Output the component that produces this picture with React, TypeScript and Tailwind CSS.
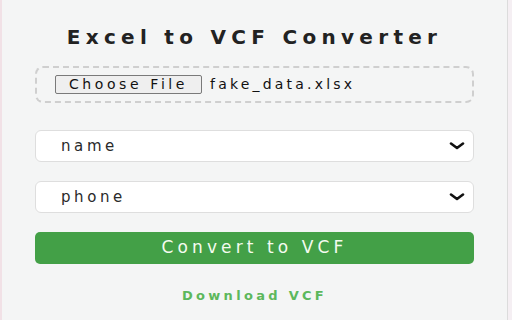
import React from 'react';

const Chevron: React.FC = () => (
  <svg width="16" height="8" viewBox="0 0 16 8" fill="none">
    <path d="M2 1.5 L8 6 L14 1.5" stroke="#111" strokeWidth="2.6" strokeLinecap="round" strokeLinejoin="round" />
  </svg>
);

const FieldSelect: React.FC<{ value: string }> = ({ value }) => (
  <div className="flex h-[32px] items-center justify-between rounded-[6px] border-[1.5px] border-[#dedede] bg-white pl-[25px] pr-[8px]">
    <span className="text-[15px] tracking-[3.6px] text-[#2a2a2a]">{value}</span>
    <Chevron />
  </div>
);

const App: React.FC = () => {
  return (
    <div className="flex h-[320px] w-[512px] overflow-hidden font-['DejaVu_Sans',sans-serif]">
      <div className="w-[2px] bg-[#f1e1e6]" />
      <main className="flex flex-1 flex-col bg-[#f4f5f5] px-[33px] pt-[25px]">
        <h1 className="text-center text-[20px] font-bold leading-[24px] tracking-[5.3px] text-[#222]">
          Excel to VCF Converter
        </h1>

        <div className="mt-[17px] flex h-[37px] items-center rounded-[8px] border-2 border-dashed border-[#cfcfcf] pl-[18px]">
          <div className="flex h-[19px] w-[147px] items-center justify-center rounded-[2px] border border-[#7a7a7a] bg-[#efefef] text-[14px] tracking-[3.6px] text-[#111]">
            Choose File
          </div>
          <span className="ml-[8px] text-[14px] tracking-[3.2px] text-[#111]">fake_data.xlsx</span>
        </div>

        <div className="mt-[27px] flex flex-col gap-[19px]">
          <FieldSelect value="name" />
          <FieldSelect value="phone" />
          <button className="flex h-[32px] items-center justify-center rounded-[5px] bg-[#43a047] text-[17px] tracking-[4.1px] text-[#f4fbef]">
            Convert to VCF
          </button>
        </div>

        <div className="mt-[22px] text-center text-[13px] font-bold tracking-[3.3px] text-[#5cb85c]">
          Download VCF
        </div>
      </main>
      <div className="w-[1px] bg-[#dcdcdc]" />
      <div className="w-[4px] bg-[#f5eff3]" />
    </div>
  );
};

export default App;
